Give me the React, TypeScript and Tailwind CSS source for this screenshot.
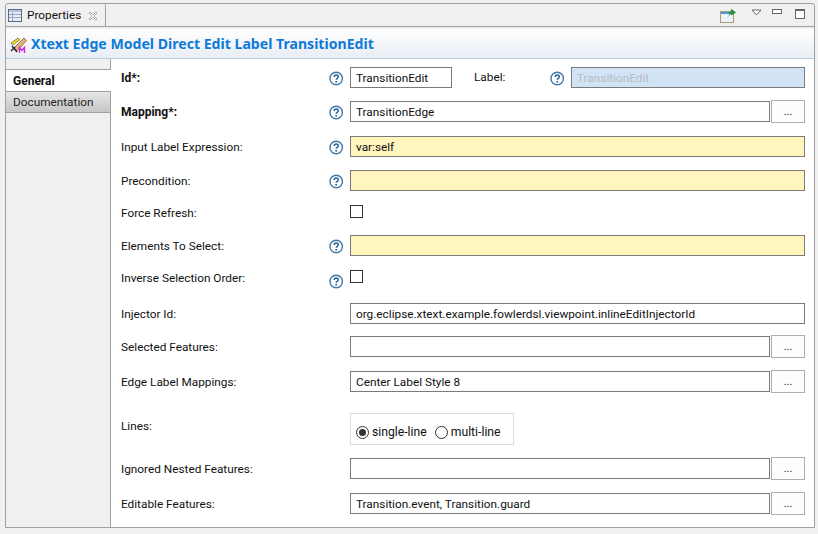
import { JSX, ReactNode } from 'react'

const inputBase = 'h-[21px] border border-[#7a7a7a] px-[5px] text-[11.8px] leading-[21px] text-[#111] truncate'

function HelpIcon({ className = 'mt-[2px]' }: { className?: string }): JSX.Element {
  return (
    <svg width="15" height="15" viewBox="0 0 15 15" className={`block shrink-0 ${className}`}>
      <circle cx="7.2" cy="7.5" r="6.2" fill="#fff" stroke="#3f79a8" strokeWidth="1.4" />
      <path d="M5.2 5.9c0-1.2 1-1.9 2-1.9s2.1.7 2.1 1.8c0 1.5-2.1 1.5-2.1 3" fill="none" stroke="#24609a" strokeWidth="1.5" />
      <rect x="6.4" y="10" width="1.6" height="1.6" fill="#24609a" />
    </svg>
  )
}

function BrowseButton(): JSX.Element {
  return (
    <div className="ml-px flex h-[23px] w-[34px] shrink-0 items-center justify-center border border-[#adadad] bg-[#fdfdfd] text-[11px] leading-[16px] text-[#222]">
      ...
    </div>
  )
}

function Row({
  label,
  help = true,
  bold = false,
  top,
  children
}: {
  label: string
  help?: boolean
  bold?: boolean
  top: string
  children: ReactNode
}): JSX.Element {
  return (
    <div className={`flex items-center ${top}`}>
      <div className={`w-[208px] shrink-0 text-[#111] ${bold ? 'text-[12px] font-bold' : 'mt-[2px] text-[11.8px]'}`}>{label}</div>
      <div className="flex w-[21px] shrink-0">{help && <HelpIcon />}</div>
      <div className="flex min-w-0 flex-1 items-center">{children}</div>
    </div>
  )
}

function TextField({ value = '', yellow = false }: { value?: string; yellow?: boolean }): JSX.Element {
  return <div className={`${inputBase} flex-1 ${yellow ? 'bg-[#fff5bd]' : 'bg-white'}`}>{value}</div>
}

function Checkbox(): JSX.Element {
  return <div className="h-[13px] w-[13px] border border-[#333] bg-white" />
}

export default function App(): JSX.Element {
  return (
    <div className="h-[534px] w-[818px] overflow-hidden bg-[#f0f0f0] pl-[5px] pr-[3px] pt-[3px] pb-[6px] font-['Roboto',sans-serif] text-[11.8px]">
      <div className="flex h-full flex-col rounded-tr-[3px] rounded-tl-[3px] border border-[#a0a0a0]">
        {/* tab bar */}
        <div className="flex h-[23px] shrink-0 items-start justify-between border-b border-[#a0a0a0]">
          <div className="-mb-px flex h-[23px] w-[100px] items-center rounded-tr-[3px] border-r border-[#a0a0a0] pl-[2px]">
            <svg width="14" height="13" viewBox="0 0 14 13" className="mr-[5px] shrink-0">
              <rect x="0.5" y="0.5" width="13" height="12" fill="#e6ecf5" stroke="#5a6a8c" />
              <rect x="1" y="1" width="12" height="2" fill="#b5c3da" />
              <path d="M1 5.5h12M1 8.5h12M4.5 3v9" stroke="#9aa8c0" />
            </svg>
            <span className="text-[11.8px] text-[#111]">Properties</span>
            <svg width="10" height="10" viewBox="0 0 10 10" className="ml-[7px] shrink-0">
              <path d="M1 2l1-1 3 3 3-3 1 1-3 3 3 3-1 1-3-3-3 3-1-1 3-3z" fill="#fff" stroke="#9a9a9a" strokeWidth="0.8" />
            </svg>
          </div>
          <div className="flex items-start pt-[5px] pr-[9px]">
            <svg width="16" height="14" viewBox="0 0 16 14">
              <rect x="0.5" y="2.5" width="13" height="11" fill="#eaf3fb" stroke="#a89d72" />
              <rect x="1" y="3" width="12" height="2" fill="#4e9ad8" />
              <path d="M7 9l2.5-3.5-1-1L10 3l1.5-3 4.5 3.5-3 2-1.5.8-1-1z" fill="#2f8c3a" />
            </svg>
            <svg width="12" height="7" viewBox="0 0 12 7" className="ml-[15px]">
              <path d="M1 1h9L5.5 6z" fill="#fff" stroke="#666" />
            </svg>
            <div className="ml-[9px] h-[5px] w-[10px] border border-[#666] bg-white" />
            <div className="ml-[13px] h-[10px] w-[10px] border border-[#666] border-t-2 bg-white" />
          </div>
        </div>

        {/* white body */}
        <div className="mt-[2px] flex min-h-0 flex-1 flex-col bg-white">
          <div className="flex h-[30px] shrink-0 items-center gap-[4px] border-b border-[#b8d0e4] bg-gradient-to-b from-white to-[#e8edf4] pl-[4px]">
            <svg width="17" height="18" viewBox="0 0 17 18" className="mt-[2px] shrink-0">
              <path d="M1 7l7-5 1.5 2-7 5z" fill="#f7e61c" stroke="#222" strokeWidth="0.5" />
              <path d="M4 12L14 2l2.5 2.5L7 15z" fill="#e4b27c" stroke="#8a5a30" strokeWidth="0.8" />
              <path d="M2 10l5 6M1 15l4-4" stroke="#222" strokeWidth="1.3" />
              <path d="M9.5 17v-5.5l2.5 3 2.5-3V17" fill="none" stroke="#d12be0" strokeWidth="1.4" />
            </svg>
            <span className="mt-[1px] font-['Noto_Sans',sans-serif] text-[14.1px] font-bold text-[#0f7ad8]">
              Xtext Edge Model Direct Edit Label TransitionEdit
            </span>
          </div>

          <div className="flex min-h-0 flex-1">
            {/* side tabs */}
            <div className="flex w-[105px] shrink-0 flex-col border-r border-[#a0a0a0] bg-[#f0f0f0] pt-[10px]">
              <div className="-mr-px flex h-[22px] items-center border-t border-[#a0a0a0] bg-white pl-[7px] text-[12px] font-bold text-[#111]">
                General
              </div>
              <div className="flex h-[22px] items-center border-y border-[#a0a0a0] bg-gradient-to-b from-[#e6e6e6] to-[#c6c6c6] pl-[7px] pt-[2px] text-[11.8px] text-[#222]">
                Documentation
              </div>
            </div>

            {/* form */}
            <div className="flex-1 pl-[10px] pr-[9px] pt-[8px]">
              <Row label="Id*:" bold top="">
                <div className={`${inputBase} w-[102px] bg-white`}>TransitionEdit</div>
                <div className="ml-[22px] w-[76px] text-[11.8px] text-[#111]">Label:</div>
                <HelpIcon />
                <div className="ml-[6px] h-[21px] flex-1 border border-[#7a7a7a] bg-[#d2e3f5] px-[5px] text-[11.8px] leading-[21px] text-[#b8bcc4]">
                  TransitionEdit
                </div>
              </Row>
              <Row label="Mapping*:" bold top="mt-[12px]">
                <TextField value="TransitionEdge" />
                <BrowseButton />
              </Row>
              <Row label="Input Label Expression:" top="mt-[13px]">
                <TextField value="var:self" yellow />
              </Row>
              <Row label="Precondition:" top="mt-[13px]">
                <TextField yellow />
              </Row>

              {/* checkbox sits above the label's centre line */}
              <div className="mt-[10px] flex h-[21px] items-center">
                <div className="w-[229px] shrink-0 pt-[5px] text-[11.8px] text-[#111]">Force Refresh:</div>
                <Checkbox />
              </div>

              <Row label="Elements To Select:" top="mt-[13px]">
                <TextField yellow />
              </Row>

              <div className="mt-[14px] flex items-start">
                <div className="w-[208px] shrink-0 text-[11.8px] text-[#111]">Inverse Selection Order:</div>
                <div className="flex w-[21px] shrink-0">
                  <HelpIcon className="mt-[4px]" />
                </div>
                <Checkbox />
              </div>

              <Row label="Injector Id:" help={false} top="mt-[14px]">
                <TextField value="org.eclipse.xtext.example.fowlerdsl.viewpoint.inlineEditInjectorId" />
              </Row>
              <Row label="Selected Features:" help={false} top="mt-[11px]">
                <TextField />
                <BrowseButton />
              </Row>
              <Row label="Edge Label Mappings:" help={false} top="mt-[12px]">
                <TextField value="Center Label Style 8" />
                <BrowseButton />
              </Row>

              <div className="mt-[20px] flex items-center">
                <div className="mb-[4px] w-[229px] shrink-0 text-[11.8px] text-[#111]">Lines:</div>
                <div className="flex h-[32px] w-[164px] items-center border border-[#dcdcdc] pl-[5px] pt-[6px] text-[12.2px] text-[#111]">
                  <div className="flex h-[13px] w-[13px] items-center justify-center rounded-full border border-[#333]">
                    <div className="h-[7px] w-[7px] rounded-full bg-[#333]" />
                  </div>
                  <span className="ml-[3px]">single-line</span>
                  <div className="ml-[8px] h-[13px] w-[13px] rounded-full border border-[#333]" />
                  <span className="ml-[3px]">multi-line</span>
                </div>
              </div>

              <Row label="Ignored Nested Features:" help={false} top="mt-[12px]">
                <TextField />
                <BrowseButton />
              </Row>
              <Row label="Editable Features:" help={false} top="mt-[12px]">
                <TextField value="Transition.event, Transition.guard" />
                <BrowseButton />
              </Row>
            </div>
          </div>
        </div>
      </div>
    </div>
  )
}
